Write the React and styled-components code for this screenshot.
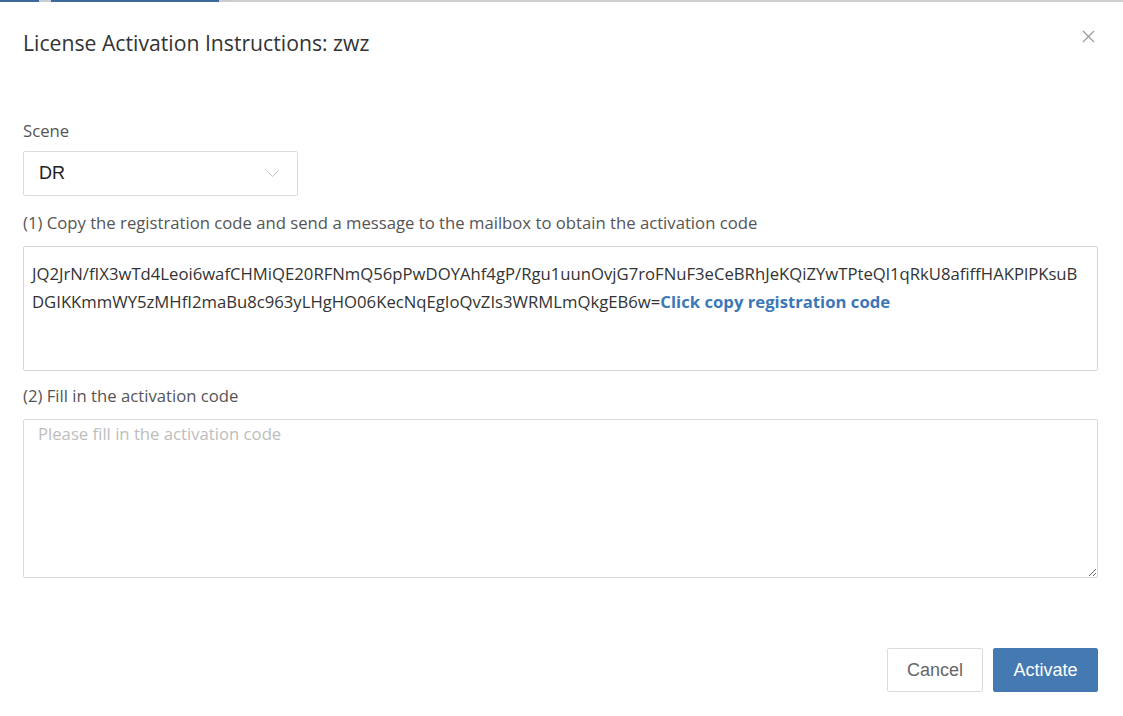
import React, { useState } from 'react';
import styled, { createGlobalStyle } from 'styled-components';

const GlobalStyle = createGlobalStyle`
    body {
        margin: 0;
        background: #fff;
        font-family: "Open Sans", "Noto Sans", sans-serif;
    }
`;

const TopStrip = styled.div`
    display: flex;
    height: 2px;
`;

const StripPart = styled.div`
    width: ${props => props.w ? props.w + 'px' : 'auto'};
    flex: ${props => props.w ? 'none' : '1'};
    background: ${props => props.color};
`;

const Modal = styled.div`
    display: flex;
    flex-direction: column;
    height: 714px;
    padding: 0 25px 0 23px;
    box-sizing: border-box;
`;

const Header = styled.div`
    display: flex;
    align-items: center;
    justify-content: space-between;
    height: 82px;
    padding-bottom: 2px;
    box-sizing: border-box;
`;

const Title = styled.h4`
    margin: 0;
    font-size: 21.2px;
    font-weight: 400;
    color: #333;
`;

const CloseButton = styled.button`
    border: none;
    background: none;
    padding: 0;
    margin: -12px -2px 0 0;
    width: 24px;
    height: 24px;
    display: flex;
    align-items: center;
    justify-content: center;
    cursor: pointer;
`;

const Body = styled.div`
    flex: 1;
    padding-top: 36px;
`;

const Label = styled.div`
    font-size: 16.7px;
    color: #555;
    line-height: 22px;
    margin-bottom: ${props => props.gap}px;
`;

const Select = styled.div`
    width: 275px;
    height: 45px;
    box-sizing: border-box;
    border: 1px solid #dcdcdc;
    border-radius: 2px;
    display: flex;
    align-items: center;
    justify-content: space-between;
    padding: 0 18px 0 15px;
    margin-bottom: 16px;
    font-family: "Liberation Sans", Arial, sans-serif;
    font-size: 18px;
    color: #222;
`;

const CodeBox = styled.div`
    height: 125px;
    box-sizing: border-box;
    border: 1px solid #d6d6d6;
    border-radius: 2px;
    padding: 13px 8px;
    margin-bottom: 14px;
    font-size: 16.7px;
    line-height: 28px;
    color: #333;
    word-break: break-all;
`;

const CopyLink = styled.a`
    color: #3c78b7;
    font-weight: 700;
    cursor: pointer;
`;

const CodeInput = styled.textarea`
    display: block;
    width: 100%;
    height: 159px;
    box-sizing: border-box;
    border: 1px solid #d9d9d9;
    border-radius: 2px;
    padding: 2px 14px;
    margin: 0;
    font-family: "Open Sans", "Noto Sans", sans-serif;
    font-size: 16.7px;
    line-height: 24px;
    color: #333;
    outline: none;

    &::placeholder {
        color: #bdbdbd;
    }
`;

const Footer = styled.div`
    display: flex;
    justify-content: flex-end;
    gap: 10px;
    padding-bottom: 24px;
`;

const Button = styled.button`
    height: 44px;
    padding: 0 ${props => props.primary ? 19.5 : 19}px;
    border-radius: 2px;
    border: 1px solid ${props => props.primary ? '#4479b2' : '#dcdcdc'};
    background: ${props => props.primary ? '#4479b2' : '#fff'};
    color: ${props => props.primary ? '#fff' : '#666'};
    font-family: "Liberation Sans", Arial, sans-serif;
    font-size: 18px;
    cursor: pointer;
`;

const registrationCode = 'JQ2JrN/fIX3wTd4Leoi6wafCHMiQE20RFNmQ56pPwDOYAhf4gP/Rgu1uunOvjG7roFNuF3eCeBRhJeKQiZYwTPteQl1qRkU8afiffHAKPlPKsuBDGIKKmmWY5zMHfI2maBu8c963yLHgHO06KecNqEgIoQvZIs3WRMLmQkgEB6w=';

const App = () => {
    const [activationCode, setActivationCode] = useState('');

    return (
        <>
            <GlobalStyle />
            <TopStrip>
                <StripPart w={39} color='#3b679b' />
                <StripPart w={12} color='#c9ccd1' />
                <StripPart w={168} color='#3b679b' />
                <StripPart w={12} color='#c9ccd1' />
                <StripPart color='#cfcfcf' />
            </TopStrip>
            <Modal>
                <Header>
                    <Title>License Activation Instructions: zwz</Title>
                    <CloseButton aria-label='close'>
                        <svg width='13' height='13' viewBox='0 0 13 13'>
                            <path d='M1 1L12 12M12 1L1 12' stroke='#9a9a9a' strokeWidth='1.2' fill='none' />
                        </svg>
                    </CloseButton>
                </Header>

                <Body>
                    <Label gap={9}>Scene</Label>
                    <Select>
                        <span>DR</span>
                        <svg width='13' height='8' viewBox='0 0 13 8'>
                            <path d='M0.5 0.5L6.5 6.5L12.5 0.5' stroke='#c2c2c2' strokeWidth='1' fill='none' />
                        </svg>
                    </Select>

                    <Label gap={12}>(1) Copy the registration code and send a message to the mailbox to obtain the activation code</Label>
                    <CodeBox>
                        {registrationCode}
                        <CopyLink>Click copy registration code</CopyLink>
                    </CodeBox>

                    <Label gap={12}>(2) Fill in the activation code</Label>
                    <CodeInput
                        value={activationCode}
                        onChange={e => setActivationCode(e.target.value)}
                        placeholder='Please fill in the activation code'
                    />
                </Body>

                <Footer>
                    <Button>Cancel</Button>
                    <Button primary>Activate</Button>
                </Footer>
            </Modal>
        </>
    );
};

export default App;
